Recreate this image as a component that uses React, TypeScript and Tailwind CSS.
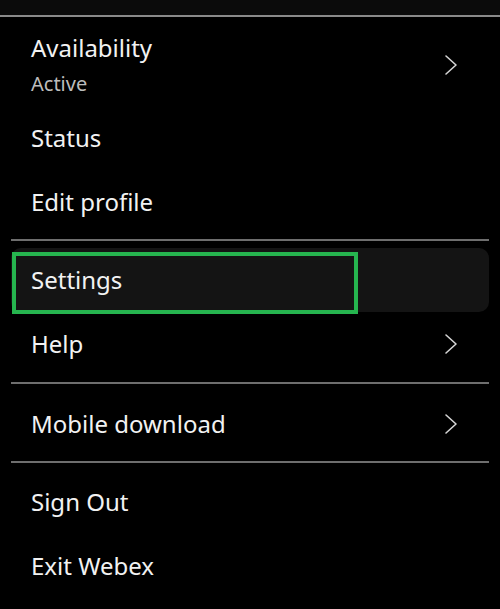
import React from "react";

const Chevron = () => (
  <svg width="14" height="22" viewBox="0 0 14 22" fill="none" className="shrink-0">
    <path d="M2 2 L12 11 L2 20" stroke="#d4d4d4" strokeWidth="1.6" strokeLinecap="round" strokeLinejoin="round" />
  </svg>
);

const Row = ({ label, chevron }: { label: string; chevron?: boolean }) => (
  <div className="flex h-[64px] items-center justify-between pl-[20px] pr-[31px]">
    <span className="text-[24px] leading-[32px] text-[#f2f2f2]">{label}</span>
    {chevron && <Chevron />}
  </div>
);

const Divider = () => <div className="h-[2px] bg-[#6e6e6e]" />;

export default function App() {
  return (
    <div
      className="w-[500px] h-[609px] bg-black overflow-hidden flex flex-col"
      style={{ fontFamily: '"Noto Sans", "Open Sans", sans-serif' }}
    >
      <div className="h-[15px] bg-[#0b0b0b] shrink-0" />
      <div className="h-[2px] bg-[#8a8a8a] shrink-0" />
      <div className="flex flex-col px-[11px]">
        <div className="flex h-[89px] items-start justify-between pl-[20px] pr-[31px]">
          <div className="flex flex-col pt-[15px]">
            <span className="text-[24px] leading-[32px] text-[#f2f2f2]">Availability</span>
            <span className="text-[20px] leading-[28px] mt-[6px] text-[#bdbdbd]">Active</span>
          </div>
          <div className="pt-[37px]">
            <Chevron />
          </div>
        </div>
        <Row label="Status" />
        <Row label="Edit profile" />
        <div className="h-[5px]" />
        <Divider />
        <div className="h-[7px]" />
        <div className="relative h-[64px] rounded-[10px] bg-[#141414] flex items-center pl-[20px]">
          <div className="absolute left-[1px] top-[4px] w-[346px] h-[62px] border-4 border-[#26b54f]" />
          <span className="relative text-[24px] leading-[32px] text-[#f2f2f2]">Settings</span>
        </div>
        <Row label="Help" chevron />
        <div className="h-[6px]" />
        <Divider />
        <div className="h-[8px]" />
        <Row label="Mobile download" chevron />
        <div className="h-[5px]" />
        <Divider />
        <div className="h-[7px]" />
        <Row label="Sign Out" />
        <Row label="Exit Webex" />
      </div>
    </div>
  );
}
